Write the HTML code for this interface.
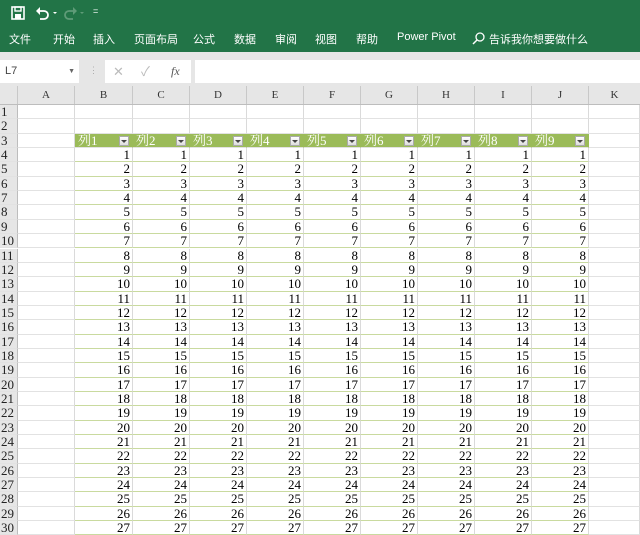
<!DOCTYPE html><html><head><meta charset="utf-8"><style>
body{margin:0;width:640px;height:526px;overflow:hidden;background:#fff;font-family:"Liberation Sans","Noto Sans CJK SC",sans-serif;position:relative}
.rib{position:absolute;left:0;top:0;width:640px;height:52px;background:#227447;color:#fff}
.tab{position:absolute;top:31px;font-size:11px}
.fb{position:absolute;top:52px;left:0;width:640px;height:34px;background:#e6e6e6}
.r{position:absolute;left:0;width:640px;height:14.35px;display:flex;font-family:"Liberation Serif","Noto Serif CJK SC",serif;font-size:13px;line-height:14px}
.r div{box-sizing:border-box;border-right:1px solid #dadada;border-bottom:1px solid #e2e2e2;text-align:right;padding-right:2px;height:100%}
.r div:first-child{background:#e6e6e6;text-align:left;padding-left:1px;border-right:1px solid #bdbdbd;color:#222}
.t div.d{border-bottom:1px solid #c9da9f}
.h div.g{background:#9bbb59;color:#fff;text-align:left;padding-left:3px;position:relative;border-right:1px solid #9bbb59}
.h div.g:after{content:"";position:absolute;right:3px;top:2px;width:10px;height:10px;background:#f0f0f0 linear-gradient(#fff,#ddd);border:1px solid #aaa;box-sizing:border-box}
.h div.g b{position:absolute;right:5px;top:6px;width:0;height:0;border-left:3px solid transparent;border-right:3px solid transparent;border-top:3px solid #444;z-index:2}
.ch{position:absolute;top:86px;left:0;width:640px;height:19px;background:#e6e6e6;display:flex;font-family:"Liberation Serif",serif;font-size:11px;line-height:19px;border-bottom:1px solid #bdbdbd;box-sizing:border-box}
.ch div{box-sizing:border-box;text-align:center;border-right:1px solid #c8c8c8;color:#333}
</style></head><body>
<div class="rib">
<svg style="position:absolute;left:11px;top:6px" width="14" height="14" viewBox="0 0 14 14"><rect x="1" y="1" width="12" height="12" fill="none" stroke="#fff" stroke-width="1.6"/><rect x="4" y="1" width="6" height="4" fill="none" stroke="#fff" stroke-width="1.4"/><rect x="4" y="8" width="6" height="5" fill="#fff"/></svg>
<svg style="position:absolute;left:35px;top:6px" width="24" height="14" viewBox="0 0 24 14"><path d="M3 5 H9 A4 4 0 0 1 9 13 H5" fill="none" stroke="#fff" stroke-width="1.8"/><path d="M1 5 L5 1 L5 9 Z" fill="#fff"/><path d="M18 6 l2 2 l2 -2z" fill="#fff"/></svg>
<svg style="position:absolute;left:62px;top:6px" width="24" height="14" viewBox="0 0 24 14"><path d="M13 5 H7 A4 4 0 0 0 7 13 H11" fill="none" stroke="#5f9b78" stroke-width="1.8"/><path d="M15 5 L11 1 L11 9 Z" fill="#5f9b78"/><path d="M18 6 l2 2 l2 -2z" fill="#5f9b78"/></svg>
<div style="position:absolute;left:93px;top:6px;font-size:9px">=</div>
<span class="tab" style="left:9px">文件</span><span class="tab" style="left:53px">开始</span><span class="tab" style="left:93px">插入</span><span class="tab" style="left:134px">页面布局</span><span class="tab" style="left:193px">公式</span><span class="tab" style="left:234px">数据</span><span class="tab" style="left:275px">审阅</span><span class="tab" style="left:315px">视图</span><span class="tab" style="left:356px">帮助</span><span class="tab" style="left:397px">Power Pivot</span>
<svg style="position:absolute;left:472px;top:32px" width="13" height="13" viewBox="0 0 13 13"><circle cx="8" cy="5" r="4" fill="none" stroke="#fff" stroke-width="1.3"/><path d="M5 8 L1 12" stroke="#fff" stroke-width="1.5"/></svg>
<span class="tab" style="left:489px">告诉我你想要做什么</span>
</div>
<div class="fb">
<div style="position:absolute;left:0;top:8px;width:79px;height:23px;background:#fff;font-size:11px;line-height:23px;padding-left:5px;box-sizing:border-box;color:#444">L7<span style="position:absolute;right:4px;font-size:7px;color:#666">▼</span></div>
<div style="position:absolute;left:89px;top:13px;color:#aaa;font-size:9px">⋮</div>
<div style="position:absolute;left:105px;top:8px;width:86px;height:23px;background:#fff;color:#bbb;font-size:13px;line-height:23px"><span style="position:absolute;left:8px">✕</span><span style="position:absolute;left:36px">✓</span><span style="position:absolute;left:66px;color:#555;font-family:'Liberation Serif';font-style:italic;font-size:12px">fx</span></div>
<div style="position:absolute;left:195px;top:8px;width:445px;height:23px;background:#fff"></div>
</div>
<div class="ch"><div style="width:18px;background:#e6e6e6"></div><div style="width:57px">A</div><div style="width:58px">B</div><div style="width:57px">C</div><div style="width:57px">D</div><div style="width:57px">E</div><div style="width:57px">F</div><div style="width:57px">G</div><div style="width:57px">H</div><div style="width:57px">I</div><div style="width:57px">J</div><div style="width:51px;border:0">K</div></div>
<div id="g"></div>
<script>
(function(){
var W=[18,57,58,57,57,57,57,57,57,57,57,51],h='';
for(var i=1;i<=30;i++){var yy=105+(i-1)*14.35;var cls='r'+(i==3?' h':'')+(i>3?' t':'');h+='<div class="'+cls+'" style="top:'+yy.toFixed(2)+'px">';
for(var c=0;c<12;c++){var t='',k='';if(c==0)t=i;else if(c>=2&&c<=10){if(i==3){k='g';t='列'+(c-1)+'<b></b>';}else if(i>3){k='d';t=i-3;}}
h+='<div class="'+k+'" style="width:'+W[c]+'px">'+t+'</div>';}h+='</div>';}
document.getElementById('g').innerHTML=h;
})();
</script>
</body></html>
